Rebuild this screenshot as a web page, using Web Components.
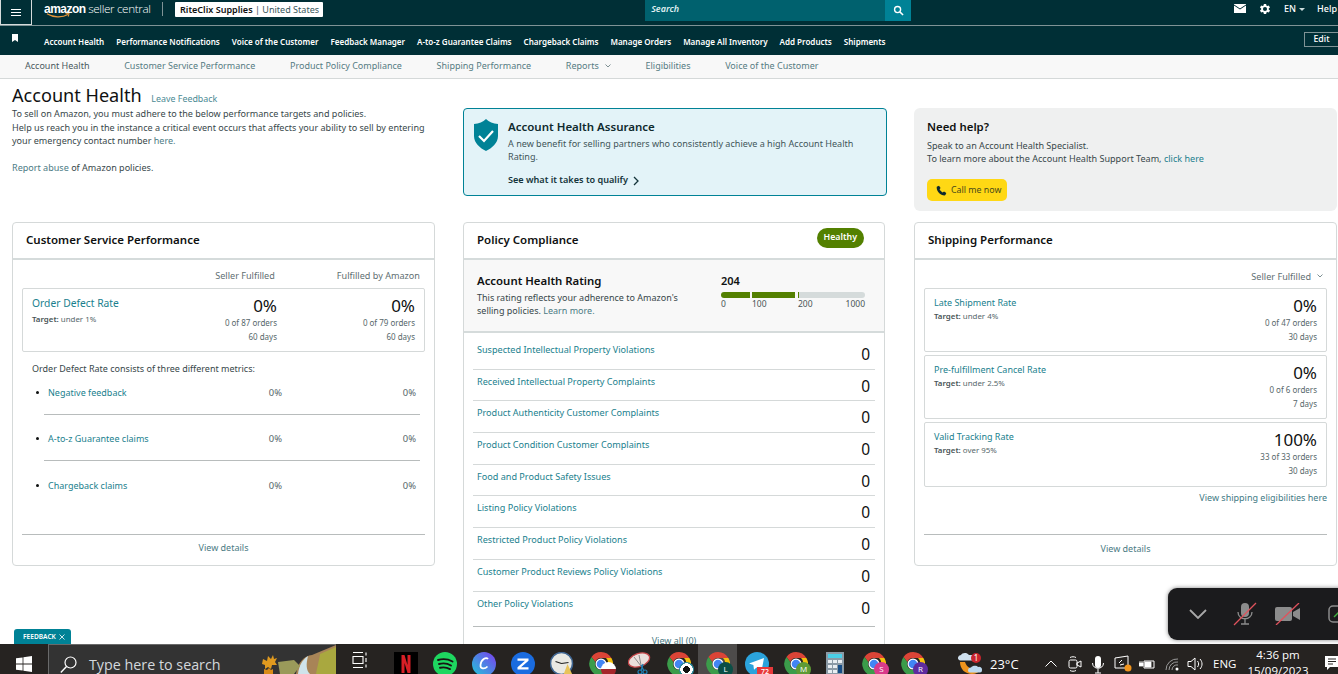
<!DOCTYPE html>
<html lang="en">
<head>
<meta charset="utf-8">
<title>Account Health</title>
<style>
    html, body {
        margin: 0;
        height: 674px;
        overflow: hidden;
        background: #fff;
        font-family: "Noto Sans", "Liberation Sans", sans-serif;
        font-size: 9.5px;
        color: #0f1111;
    }
    body { position: relative; }
</style>
</head>
<body>
<sc-topbar></sc-topbar>
<sc-menubar></sc-menubar>
<sc-subnav></sc-subnav>
<sc-main>
    <sc-intro slot="intro"></sc-intro>
    <sc-assurance slot="assurance"></sc-assurance>
    <sc-help slot="help"></sc-help>

    <sc-card slot="service" heading="Customer Service Performance" tall>
        <sc-service></sc-service>
    </sc-card>

    <sc-card slot="policy" heading="Policy Compliance" badge="Healthy" style="margin-right:1px">
        <sc-rating></sc-rating>
        <sc-policy-list>
            <sc-policy-row>Suspected Intellectual Property Violations</sc-policy-row>
            <sc-policy-row>Received Intellectual Property Complaints</sc-policy-row>
            <sc-policy-row>Product Authenticity Customer Complaints</sc-policy-row>
            <sc-policy-row>Product Condition Customer Complaints</sc-policy-row>
            <sc-policy-row>Food and Product Safety Issues</sc-policy-row>
            <sc-policy-row>Listing Policy Violations</sc-policy-row>
            <sc-policy-row>Restricted Product Policy Violations</sc-policy-row>
            <sc-policy-row>Customer Product Reviews Policy Violations</sc-policy-row>
            <sc-policy-row>Other Policy Violations</sc-policy-row>
        </sc-policy-list>
    </sc-card>

    <sc-card slot="shipping" heading="Shipping Performance" tall>
        <sc-shipping></sc-shipping>
    </sc-card>
</sc-main>
<sc-feedback></sc-feedback>
<sc-zoombar></sc-zoombar>
<sc-taskbar></sc-taskbar>

<script>
const LINK = '#1a7f8e';

class ScTopbar extends HTMLElement {
    constructor() {
        super();
        this.attachShadow({mode: 'open'});
        this.shadowRoot.innerHTML = `
            <style>
                :host { display: flex; align-items: flex-start; height: 25px; background: #002f36; border-bottom: 1px solid #7f9396; color: #fff; }
                .burger { box-sizing: border-box; width: 32px; height: 25px; border: 1px solid #d5dbdb; border-top: 0; display: flex; align-items: center; justify-content: center; }
                .logo { position: relative; margin-left: 12px; width: 107px; height: 25px; line-height: 17px; white-space: nowrap; }
                .logo b { font-family: "Liberation Sans", sans-serif; font-weight: 700; font-size: 12px; letter-spacing: -.5px; }
                .logo span { font-family: "Open Sans", sans-serif; font-weight: 300; font-size: 11.700px; letter-spacing: -.35px; }
                .logo svg { position: absolute; left: 2px; top: 13px; }
                .div { width: 1px; height: 14px; margin: 2px 12px 0 11px; background: #7f9396; }
                .store { height: 15px; margin-top: 2px; padding: 0 4px 0 5px; background: #fff; color: #0f1111; font-size: 9.050px; font-weight: 600; line-height: 15px; white-space: nowrap; border-radius: 1px; }
                .store span { color: #37575c; font-weight: 400; }
                .search { margin-left: 322px; width: 240px; height: 21px; background: #00616e; font-size: 9px; font-style: italic; font-weight: 600; line-height: 18px; text-indent: 6px; color: #dfeff1; }
                .btn { width: 26px; height: 21px; background: #008296; display: flex; align-items: center; justify-content: center; }
                .tools { margin-left: auto; display: flex; align-items: center; height: 17px; font-size: 9px; font-weight: 500; }
                .tools svg { display: block; }
                .mail { margin-right: 12px; }
                .gear { margin-right: 12px; }
                .caret { display: inline-block; margin-left: 3px; vertical-align: 1px; border: 3px solid transparent; border-top-color: #cdd; border-bottom: 0; }
                .help { margin-left: 12px; margin-right: 1px; }
            </style>
            <div class="burger"><svg width="12" height="9" viewBox="0 0 12 9"><path d="M1 1.500h10M1 4.500h10M1 7.500h10" stroke="#fff" stroke-width="1"/></svg></div>
            <div class="logo"><b>amazon</b> <span>seller central</span>
                <svg width="28" height="6" viewBox="0 0 28 6"><path d="M1 .8C7 4.600 16 5 22 1.600" fill="none" stroke="#e8973a" stroke-width="1.200"/><path d="M19.500 .8l3.600-.4-.8 3.200" fill="none" stroke="#e8973a" stroke-width="1"/></svg>
            </div>
            <div class="div"></div>
            <div class="store">RiteClix Supplies <span>| United States</span></div>
            <div class="search">Search</div>
            <div class="btn"><svg width="11" height="11" viewBox="0 0 12 12"><circle cx="5" cy="5" r="3.300" fill="none" stroke="#fff" stroke-width="1.500"/><path d="M7.500 7.500l3.500 3.500" stroke="#fff" stroke-width="1.600"/></svg></div>
            <div class="tools">
                <svg class="mail" width="12" height="9" viewBox="0 0 12 9"><path d="M0 0h12v9H0z" fill="#fff"/><path d="M0 1l6 4 6-4" fill="none" stroke="#002f36" stroke-width="1"/></svg>
                <svg class="gear" width="14" height="14" viewBox="0 0 24 24"><path fill="#fff" d="M19.400 13a7.600 7.600 0 0 0 0-2l2.100-1.600-2-3.500-2.500 1a7.500 7.500 0 0 0-1.700-1L15 3.300h-4l-.4 2.600a7.500 7.500 0 0 0-1.700 1l-2.500-1-2 3.500L6.500 11a7.600 7.600 0 0 0 0 2l-2.100 1.600 2 3.500 2.500-1a7.500 7.500 0 0 0 1.700 1l.4 2.600h4l.4-2.600a7.500 7.500 0 0 0 1.700-1l2.500 1 2-3.500zM13 15.500a3.500 3.500 0 1 1 0-7 3.500 3.500 0 0 1 0 7z" transform="translate(-1 0)"/></svg>
                <span>EN<i class="caret"></i></span>
                <span class="help">Help</span>
            </div>
        `;
    }
}

class ScMenubar extends HTMLElement {
    constructor() {
        super();
        const items = ['Account Health', 'Performance Notifications', 'Voice of the Customer', 'Feedback Manager', 'A-to-z Guarantee Claims', 'Chargeback Claims', 'Manage Orders', 'Manage All Inventory', 'Add Products', 'Shipments'];
        this.attachShadow({mode: 'open'});
        this.shadowRoot.innerHTML = `
            <style>
                :host { display: flex; align-items: center; height: 29px; padding-top: 2px; box-sizing: border-box; background: #002f36; color: #fff; font-size: 8.050px; font-weight: 600; white-space: nowrap; }
                svg { margin: -7px 26px 0 12px; flex: none; }
                span { margin-right: 12px; }
                .edit { margin: -4px 0 0 auto; box-sizing: border-box; width: 34px; height: 15px; border: 1px solid #7f9396; border-right: 0; text-align: center; line-height: 13px; font-size: 8.800px; font-weight: 500; }
            </style>
            <svg width="6" height="8" viewBox="0 0 6 8"><path d="M0 0h6v8L3 6 0 8z" fill="#fff"/></svg>
            ${items.map(i => `<span>${i}</span>`).join('')}
            <div class="edit">Edit</div>
        `;
    }
}

class ScSubnav extends HTMLElement {
    constructor() {
        super();
        const items = ['Customer Service Performance', 'Product Policy Compliance', 'Shipping Performance'];
        this.attachShadow({mode: 'open'});
        this.shadowRoot.innerHTML = `
            <style>
                :host { display: flex; align-items: center; box-sizing: border-box; height: 24px; padding: 0 0 3px 25px; gap: 34.700px; background: #f8f8f8; border-bottom: 1px solid #d5d9d9; color: #567c83; font-size: 9px; white-space: nowrap; }
                .first { color: #4a5a5e; }
                svg { margin-left: 6px; vertical-align: 1px; }
            </style>
            <span class="first">Account Health</span>
            ${items.map(i => `<span>${i}</span>`).join('')}
            <span>Reports<svg width="6" height="4" viewBox="0 0 6 4"><path d="M.5.5L3 3 5.500.5" fill="none" stroke="#7d8f92" stroke-width="1"/></svg></span>
            <span>Eligibilities</span>
            <span>Voice of the Customer</span>
        `;
    }
}

class ScMain extends HTMLElement {
    constructor() {
        super();
        this.attachShadow({mode: 'open'});
        this.shadowRoot.innerHTML = `
            <style>
                :host { display: grid; grid-template-columns: 423px 423px 423px; grid-template-rows: 137px auto; column-gap: 28px; padding: 6px 1px 0 12px; }
            </style>
            <slot name="intro"></slot>
            <slot name="assurance"></slot>
            <slot name="help"></slot>
            <slot name="service"></slot>
            <slot name="policy"></slot>
            <slot name="shipping"></slot>
        `;
    }
}

class ScIntro extends HTMLElement {
    constructor() {
        super();
        this.attachShadow({mode: 'open'});
        this.shadowRoot.innerHTML = `
            <style>
                :host { display: block; color: #37474a; font-size: 9.050px; line-height: 13.500px; }
                h1 { margin: 0 0 -2px; font-size: 18.100px; font-weight: 400; line-height: 20px; color: #0f1111; }
                h1 a { margin-left: 5px; font-size: 8.900px; color: #4b8a94; }
                p { margin: 0; white-space: nowrap; }
                p + p { margin-top: 13px; }
                a { color: #4b7b84; }
            </style>
            <h1>Account Health <a>Leave Feedback</a></h1>
            <p>To sell on Amazon, you must adhere to the below performance targets and policies.<br>
            Help us reach you in the instance a critical event occurs that affects your ability to sell by entering<br>
            your emergency contact number <a>here.</a></p>
            <p><a>Report abuse</a> of Amazon policies.</p>
        `;
    }
}

class ScAssurance extends HTMLElement {
    constructor() {
        super();
        this.attachShadow({mode: 'open'});
        this.shadowRoot.innerHTML = `
            <style>
                :host { display: flex; box-sizing: border-box; margin-top: 23px; width: 424px; height: 88px; padding: 10px 12px 0 10px; background: #e3f3f8; border: 1px solid #008296; border-radius: 4px; font-size: 9.060px; line-height: 13px; color: #3f5559; }
                svg { flex: none; margin-right: 10px; }
                h2 { margin: 1px 0 3px; font-size: 11.500px; font-weight: 600; line-height: 14px; color: #0f2a2e; }
                a { display: block; margin-top: 10px; font-size: 9.100px; font-weight: 600; color: #14343a; }
                a svg { margin: 0 0 -3px 3px; }
            </style>
            <svg width="24" height="32" viewBox="0 0 24 32"><path d="M12 0C9 3 5 4.500 0 5v12c0 7 6 12 12 15 6-3 12-8 12-15V5c-5-.5-9-2-12-5z" fill="#008296"/><path d="M5 17l5 5 9-10" fill="none" stroke="#fff" stroke-width="2.200"/></svg>
            <div>
                <h2>Account Health Assurance</h2>
                A new benefit for selling partners who consistently achieve a high Account Health Rating.
                <a>See what it takes to qualify <svg width="6" height="10" viewBox="0 0 6 10"><path d="M1 1l4 4-4 4" fill="none" stroke="#14343a" stroke-width="1.300"/></svg></a>
            </div>
        `;
    }
}

class ScHelp extends HTMLElement {
    constructor() {
        super();
        this.attachShadow({mode: 'open'});
        this.shadowRoot.innerHTML = `
            <style>
                :host { display: block; box-sizing: border-box; margin-top: 23px; height: 103px; padding: 12px 13px; background: #eff0f0; border-radius: 6px; font-size: 9.070px; line-height: 13px; color: #37474a; white-space: nowrap; }
                h2 { margin: 0 0 5px; font-size: 11.400px; font-weight: 600; line-height: 14px; color: #0f1111; }
                a { color: ${LINK}; }
                .call { display: flex; align-items: center; box-sizing: border-box; width: 80px; height: 22px; margin-top: 14px; padding-left: 9px; gap: 4px; background: #ffd814; border-radius: 5px; color: #4a4a1a; font-size: 8.800px; }
            </style>
            <h2>Need help?</h2>
            Speak to an Account Health Specialist.<br>
            To learn more about the Account Health Support Team, <a>click here</a>
            <div class="call"><svg width="11" height="11" viewBox="0 0 24 24"><path fill="#0f2a2e" d="M6.600 1.500l3.400 5-2.200 3c1.400 3 3.700 5.300 6.700 6.700l3-2.200 5 3.400-2 4.600c-.4.700-1 1-1.800 1C9.500 22.500 1.500 14.500 1.500 5.300c0-.8.300-1.400 1-1.800z"/></svg>Call me now</div>
        `;
    }
}

class ScCard extends HTMLElement {
    constructor() {
        super();
        this.attachShadow({mode: 'open'});
        const badge = this.getAttribute('badge');
        this.shadowRoot.innerHTML = `
            <style>
                :host { display: block; box-sizing: border-box; background: #fff; border: 1px solid #d5d9d9; border-radius: 4px; }
                :host([tall]) { height: 344px; }
                header { display: flex; align-items: center; justify-content: space-between; box-sizing: border-box; height: 37px; padding: 0 20px 2px 13px; border-bottom: 2px solid #d5dbdb; }
                h2 { margin: 0; font-size: 11.500px; font-weight: 600; color: #0f1111; }
                .badge { margin-top: -3px; height: 20px; padding: 0 7px; border-radius: 10px; background: #538000; color: #fff; font-size: 8.800px; font-weight: 600; line-height: 19px; }
            </style>
            <header><h2>${this.getAttribute('heading')}</h2>${badge ? `<span class="badge">${badge}</span>` : ''}</header>
            <slot></slot>
        `;
    }
}

class ScMetric extends HTMLElement {
    constructor() {
        super();
        this.attachShadow({mode: 'open'});
        this.shadowRoot.innerHTML = `
            <style>
                :host { display: flex; justify-content: space-between; box-sizing: border-box; padding: 7px 9px 0; border: 1px solid #d5d9d9; border-radius: 2px; color: #56676a; font-size: 8px; line-height: 14px; }
                .name { margin-top: var(--name-top, 0); color: ${LINK}; font-size: var(--name-size, 9px); line-height: 13px; }
                .target { margin-top: var(--target-top, 1px); font-size: 7.900px; line-height: 12px; }
                b { font-weight: 600; color: #4a5557; }
                .vals { display: flex; }
            </style>
            <div><div class="name">${this.getAttribute('name')}</div><div class="target"><b>Target:</b> ${this.getAttribute('target')}</div></div>
            <div class="vals"><slot></slot></div>
        `;
    }
}

class ScValue extends HTMLElement {
    constructor() {
        super();
        this.attachShadow({mode: 'open'});
        this.shadowRoot.innerHTML = `
            <style>
                :host { display: block; width: var(--val-width, auto); text-align: right; color: #56676a; font-size: 8px; line-height: 14px; white-space: nowrap; }
                .pct { font-size: 17px; line-height: 20px; color: #0f1111; }
            </style>
            <div class="pct">${this.getAttribute('pct')}</div>
            ${this.getAttribute('orders')}<br>${this.getAttribute('days')}
        `;
    }
}

class ScService extends HTMLElement {
    constructor() {
        super();
        this.attachShadow({mode: 'open'});
        const row = (name) => `
            <div class="row">
                <span class="dot"></span><span class="n">${name}</span><span class="a">0%</span><span class="b">0%</span>
            </div>`;
        this.shadowRoot.innerHTML = `
            <style>
                :host { display: block; position: relative; height: 305px; padding: 0 9px; color: #37474a; font-size: 9px; }
                .heads { display: flex; justify-content: flex-end; height: 28px; padding-right: 5px; line-height: 32px; color: #5f6f72; font-size: 9.100px; white-space: nowrap; }
                .heads span:first-child { margin-right: 62px; }
                sc-metric { height: 64px; --name-size: 10.300px; --name-top: 1px; --target-top: 3px; --val-width: 138px; padding-right: 9px; }
                sc-value:first-child { --val-width: auto; }
                .lead { margin: 10px 0 0 10px; line-height: 13px; }
                .list { margin: 12px 5px 0 14px; }
                .row { position: relative; display: flex; height: 27px; }
                .rule { height: 1px; background: #b8bcbc; margin-left: 8px; }
                .dot { position: absolute; left: 0; top: 4px; width: 3px; height: 3px; border-radius: 50%; background: #0f1111; }
                .n { margin-left: 12px; color: ${LINK}; line-height: 12px; }
                .a, .b { position: absolute; top: 0; line-height: 12px; font-size: 9.400px; color: #56676a; }
                .a { right: 138px; }
                .b { right: 4px; }
                .foot { position: absolute; left: 9px; right: 9px; bottom: 0; height: 30px; border-top: 1px solid #b8bcbc; text-align: center; color: #4b7b84; line-height: 26px; }
            </style>
            <div class="heads"><span>Seller Fulfilled</span><span>Fulfilled by Amazon</span></div>
            <sc-metric name="Order Defect Rate" target="under 1%">
                <sc-value pct="0%" orders="0 of 87 orders" days="60 days"></sc-value>
                <sc-value pct="0%" orders="0 of 79 orders" days="60 days"></sc-value>
            </sc-metric>
            <div class="lead">Order Defect Rate consists of three different metrics:</div>
            <div class="list">
                ${row('Negative feedback')}<div class="rule"></div>
                <div style="height:18px"></div>
                ${row('A-to-z Guarantee claims')}<div class="rule"></div>
                <div style="height:19px"></div>
                ${row('Chargeback claims')}
            </div>
            <div class="foot">View details</div>
        `;
    }
}

class ScRating extends HTMLElement {
    constructor() {
        super();
        this.attachShadow({mode: 'open'});
        this.shadowRoot.innerHTML = `
            <style>
                :host { display: flex; box-sizing: border-box; height: 73px; padding: 13px 19px 0 13px; background: #f8f8f8; border-bottom: 2px solid #d5dbdb; font-size: 9px; line-height: 13px; color: #37474a; }
                .l { width: 244px; flex: none; }
                h3 { margin: 0 0 3px; font-size: 11.400px; font-weight: 600; line-height: 15px; color: #0f1111; }
                p { margin: 0; }
                a { color: #4b7b84; }
                .r { flex: 1; }
                .score { font-size: 11px; font-weight: 600; line-height: 15px; color: #0f1111; margin-bottom: 4px; }
                .bar { display: grid; grid-template-columns: 29px 2px 43px 3px 1px 1fr; height: 6px; }
                .g { background: #538000; }
                .g.a { border-radius: 3px 0 0 3px; }
                .e { background: #d5dbdb; border-radius: 0 3px 3px 0; }
                .labels { display: flex; font-size: 8.500px; line-height: 11px; color: #4a5557; }
                .labels span:nth-child(1) { width: 31px; }
                .labels span:nth-child(2) { width: 46px; }
                .labels span:nth-child(4) { margin-left: auto; }
            </style>
            <div class="l">
                <h3>Account Health Rating</h3>
                <p>This rating reflects your adherence to Amazon's<br>selling policies. <a>Learn more.</a></p>
            </div>
            <div class="r">
                <div class="score">204</div>
                <div class="bar"><div class="g a"></div><div></div><div class="g"></div><div></div><div class="g"></div><div class="e"></div></div>
                <div class="labels"><span>0</span><span>100</span><span>200</span><span>1000</span></div>
            </div>
        `;
    }
}

class ScPolicyList extends HTMLElement {
    constructor() {
        super();
        this.attachShadow({mode: 'open'});
        this.shadowRoot.innerHTML = `
            <style>
                :host { display: block; padding: 5px 9px 0; height: 322px; }
                .foot { border-top: 1px solid #b8bcbc; height: 30px; text-align: center; color: #4b7b84; font-size: 9px; line-height: 27px; }
            </style>
            <slot></slot>
            <div class="foot">View all (0)</div>
        `;
    }
}

class ScPolicyRow extends HTMLElement {
    constructor() {
        super();
        this.attachShadow({mode: 'open'});
        this.shadowRoot.innerHTML = `
            <style>
                :host { display: flex; justify-content: space-between; box-sizing: border-box; height: 31.700px; padding: 5px 5px 0 4px; border-bottom: 1px solid #d5d9d9; color: ${LINK}; font-size: 9.100px; line-height: 13px; }
                :host(:last-of-type) { border-bottom: 0; height: 34px; }
                .n { margin-top: 2px; color: #0f1111; font-size: 15.500px; line-height: 18px; }
            </style>
            <span><slot></slot></span><span class="n">0</span>
        `;
    }
}

class ScShipping extends HTMLElement {
    constructor() {
        super();
        this.attachShadow({mode: 'open'});
        const m = (h, name, target, pct, orders, days) => `
            <sc-metric style="height:${h}px" name="${name}" target="${target}"><sc-value pct="${pct}" orders="${orders}" days="${days}"></sc-value></sc-metric>`;
        this.shadowRoot.innerHTML = `
            <style>
                :host { display: block; position: relative; height: 305px; padding: 0 9px; color: #4b7b84; font-size: 9px; }
                .sel { display: flex; justify-content: flex-end; align-items: center; gap: 6px; height: 28px; padding: 4px 4px 0 0; box-sizing: border-box; color: #5f6f72; font-size: 9.100px; }
                .boxes { display: grid; row-gap: 3px; }
                sc-metric { --name-size: 9px; }
                .link { margin-top: 4px; text-align: right; line-height: 13px; color: #3f7b85; }
                .foot { position: absolute; left: 9px; right: 9px; bottom: 0; height: 30px; border-top: 1px solid #b8bcbc; text-align: center; line-height: 28px; }
            </style>
            <div class="sel">Seller Fulfilled <svg width="6" height="4" viewBox="0 0 6 4"><path d="M.5.5L3 3 5.500.5" fill="none" stroke="#7d8f92" stroke-width="1"/></svg></div>
            <div class="boxes">
                ${m(64, 'Late Shipment Rate', 'under 4%', '0%', '0 of 47 orders', '30 days')}
                ${m(64, 'Pre-fulfillment Cancel Rate', 'under 2.5%', '0%', '0 of 6 orders', '7 days')}
                ${m(65, 'Valid Tracking Rate', 'over 95%', '100%', '33 of 33 orders', '30 days')}
            </div>
            <div class="link">View shipping eligibilities here</div>
            <div class="foot">View details</div>
        `;
    }
}

class ScFeedback extends HTMLElement {
    constructor() {
        super();
        this.attachShadow({mode: 'open'});
        this.shadowRoot.innerHTML = `
            <style>
                :host { position: absolute; left: 14px; top: 629px; box-sizing: border-box; width: 57px; height: 15px; background: #008296; border-radius: 3px 3px 0 0; color: #fff; font-size: 6.600px; font-weight: 600; line-height: 15px; padding-left: 9px; white-space: nowrap; }
                svg { margin-left: 3px; vertical-align: -1px; }
            </style>
            FEEDBACK<svg width="6" height="6" viewBox="0 0 6 6"><path d="M.5.5l5 5M5.500.5l-5 5" stroke="#fff" stroke-width=".8"/></svg>
        `;
    }
}

class ScZoombar extends HTMLElement {
    constructor() {
        super();
        this.attachShadow({mode: 'open'});
        this.shadowRoot.innerHTML = `
            <style>
                :host { position: absolute; left: 1168px; top: 588px; width: 190px; height: 52px; display: flex; align-items: center; background: #1b1b1d; border-radius: 9px; box-shadow: 0 0 4px rgba(0,0,0,.5); }
                svg { display: block; flex: none; }
            </style>
            <svg style="margin-left:21px" width="18" height="10" viewBox="0 0 18 10"><path d="M1 1l8 8 8-8" fill="none" stroke="#a9a9a9" stroke-width="1.800"/></svg>
            <svg style="margin-left:26px" width="24" height="24" viewBox="0 0 24 24"><rect x="8" y="1" width="8" height="14" rx="4" fill="#8c8c8c"/><path d="M5 10c0 9 14 9 14 0M12 17v5M8 22h8" fill="none" stroke="#8c8c8c" stroke-width="1.300"/><path d="M1 23L23 1" stroke="#e0525c" stroke-width="1.300"/></svg>
            <svg style="margin-left:18px" width="25" height="22" viewBox="0 0 25 22"><rect x="0" y="4" width="17" height="14" rx="2" fill="#8c8c8c"/><path d="M18 9l7-4v12l-7-4z" fill="#8c8c8c"/><path d="M1 22L24 0" stroke="#e0525c" stroke-width="1.300"/></svg>
            <svg style="margin-left:28px" width="20" height="20" viewBox="0 0 20 20"><rect x="1" y="2" width="16" height="16" rx="4" fill="none" stroke="#8c8c8c" stroke-width="1.500"/><path d="M6 13l5-5" stroke="#3fae3f" stroke-width="1.500"/></svg>
        `;
    }
}

// taskbar icons are drawn on a 24x24 box
const chrome = (badge) => `
    <svg width="24" height="24" viewBox="0 0 24 24">
        <path d="M12 0a12 12 0 0 1 10.400 6H12a6 6 0 0 0-5.700 4.100L2.500 5A12 12 0 0 1 12 0z" fill="#db4437"/>
        <path d="M22.400 6A12 12 0 0 1 12 24l5.200-9A6 6 0 0 0 17 6z" fill="#f4c20d"/>
        <path d="M2.500 5A12 12 0 0 0 12 24l5.200-9a6 6 0 0 1-10.900-4.900z" fill="#3b9c4a"/>
        <circle cx="12" cy="12" r="5.500" fill="#fff"/><circle cx="12" cy="12" r="4.300" fill="#4285f4"/>
    </svg>${badge || ''}`;
const letter = (bg, t) => `<i class="badge" style="background:${bg}">${t}</i>`;

const ICONS = {
    task: `<svg width="16" height="18" viewBox="0 0 16 18"><path d="M1 .5h10M1 15.500h10M1 4.500h10v7H1zM14 .5v3M14 6v4M14 12.500v3" fill="none" stroke="#fff" stroke-width="1.100"/></svg>`,
    netflix: `<svg width="24" height="24" viewBox="0 0 24 24"><rect width="24" height="24" fill="#000"/><path d="M7.500 3h3l3 10V3h3v18h-3l-3-10v10h-3z" fill="#d81f26"/></svg>`,
    spotify: `<svg width="24" height="24" viewBox="0 0 24 24"><circle cx="12" cy="12" r="12" fill="#1ed760"/><path d="M5 8c5-1.500 10-1 14.500 1.500M6 12c4-1 8.500-.6 12 1.500M7 15.800c3.500-.8 7-.4 10 1.300" fill="none" stroke="#191414" stroke-width="1.900" stroke-linecap="round"/></svg>`,
    canva: `<svg width="24" height="24" viewBox="0 0 24 24"><defs><linearGradient id="c" x1="0" y1="1" x2="1" y2="0"><stop offset="0" stop-color="#1fc8d8"/><stop offset="1" stop-color="#7d3cf0"/></linearGradient></defs><circle cx="12" cy="12" r="12" fill="url(#c)"/><path d="M16 7c-2-2.500-7 .5-7.500 6-.4 4 4 4.500 7 1.500" fill="none" stroke="#fff" stroke-width="1.700"/></svg>`,
    zoom: `<svg width="24" height="24" viewBox="0 0 24 24"><circle cx="12" cy="12" r="12" fill="#1a6ce0"/><path d="M6.500 6.500h11v2.200L10 15.300h7.500v2.200h-11v-2.200L14 8.700H6.500z" fill="#fff"/></svg>`,
    clock: `<svg width="24" height="24" viewBox="0 0 24 24"><circle cx="11.500" cy="11.500" r="11" fill="#e9e9e4" stroke="#3f6591" stroke-width="1.500"/><path d="M11.500 11.500l-6-2M11.500 11.500l7-1" stroke="#222" stroke-width="1.200"/><path d="M17.500 12l5.500 12H13z" fill="#e8c35a"/></svg>`,
    scissors: `<svg width="24" height="24" viewBox="0 0 24 24"><ellipse cx="11" cy="8" rx="11" ry="6.500" transform="rotate(-20 11 8)" fill="#eadfdc" stroke="#c6474a" stroke-width="1.300"/><path d="M11 3l2 10M6 5l7 9" stroke="#8a8a8a" stroke-width="1"/><path d="M13 13l3 6M15 12l-2 7" stroke="#1f7fb4" stroke-width="1.300"/><circle cx="12" cy="20" r="2" fill="none" stroke="#1f7fb4" stroke-width="1.200"/><circle cx="17" cy="20" r="2" fill="none" stroke="#1f7fb4" stroke-width="1.200"/></svg>`,
    telegram: `<svg width="24" height="24" viewBox="0 0 24 24"><circle cx="12" cy="12" r="12" fill="#2ba3dc"/><path d="M4 11.500L19 6l-2.500 13-5-3.500-2.500 2.300-.6-4.800z" fill="#fff"/></svg><i class="count">72</i>`,
    calc: `<svg width="18" height="24" viewBox="0 0 18 24"><rect width="18" height="24" fill="#8b9aa6"/><rect x="2" y="2" width="14" height="4" fill="#4bcfe8"/><g fill="#e9eef2"><rect x="2" y="8" width="4" height="3"/><rect x="7" y="8" width="4" height="3"/><rect x="12" y="8" width="4" height="3"/><rect x="2" y="13" width="4" height="3"/><rect x="7" y="13" width="4" height="3"/><rect x="2" y="18" width="4" height="3"/><rect x="7" y="18" width="4" height="3"/></g><rect x="12" y="13" width="4" height="8" fill="#174d86"/></svg>`
};

class ScTaskIcon extends HTMLElement {
    constructor() {
        super();
        this.attachShadow({mode: 'open'});
        const kind = this.getAttribute('kind');
        const bg = this.getAttribute('bg');
        const t = this.getAttribute('letter');
        const inner = kind === 'chrome' ? chrome(bg ? letter(bg, t) : '') : ICONS[kind];
        this.shadowRoot.innerHTML = `
            <style>
                :host { display: flex; justify-content: center; align-items: flex-start; position: relative; box-sizing: border-box; width: 39px; height: 30px; padding-top: 8px; }
                :host([on]) { background: #4d4b4a; }
                svg { display: block; flex: none; }
                .badge { position: absolute; left: 20px; top: 18px; width: 15px; height: 15px; border-radius: 50%; color: #fff; font-style: normal; font-size: 8px; line-height: 14px; text-align: center; }
                .count { position: absolute; left: 20px; top: 23px; width: 16px; height: 9px; background: #e8393a; color: #fff; font-style: normal; font-size: 7px; font-weight: 600; line-height: 9px; text-align: center; }
            </style>
            ${inner}
        `;
    }
}

class ScTaskbar extends HTMLElement {
    constructor() {
        super();
        this.attachShadow({mode: 'open'});
        const pic = `<svg class="pic" width="76" height="30" viewBox="0 0 76 30">
            <path d="M36 30C38 18 44 12 52 11L76 1v29z" fill="#a88457"/>
            <path d="M56 30c2-10 4-18 4-20L76 3v27z" fill="#a9a83f"/>
            <path d="M38 30c1-8 4-14 10-18-2 8-2 14 2 18z" fill="#cfe3ea"/>
            <path d="M18 18l16-2 6 6-6 8H20z" fill="#9a9a5a"/>
            <path d="M3 15l4 2 1-5 3 3 2-4 1 4 3-1-2 4 2 3h-5l-1 4-3-2-3 2v-4l-3-1z" fill="#e09a1f"/>
            <path d="M4 25l3 1 2-2 2 2 2-1v5H4z" fill="#d98b17"/>
        </svg>`;
        this.shadowRoot.innerHTML = `
            <style>
                :host { position: absolute; left: 0; top: 644px; width: 1338px; height: 30px; overflow: hidden; display: flex; background: #262321; color: #fff; font-family: "Open Sans", "Noto Sans", sans-serif; white-space: nowrap; }
                .start { width: 48px; flex: none; display: flex; justify-content: center; padding-top: 12px; box-sizing: border-box; }
                .search { position: relative; flex: none; box-sizing: border-box; width: 288px; display: flex; background: #333; border-left: 1px solid #6a6a6a; border-top: 1px solid #6a6a6a; }
                .search svg.mag { margin: 11px 0 0 11px; }
                .search span { margin-left: 12px; font-size: 14.300px; line-height: 39px; color: #d4d8dc; height: 30px; }
                .pic { position: absolute; right: 0; top: -1px; }
                .apps { display: flex; margin-left: 4px; }
                .apps sc-task-icon:first-child { margin-right: 7px; }
                .tray { position: relative; flex: 1; }
                .tray > * { position: absolute; }
                .t { font-size: 11.500px; line-height: 14px; }
                .clock { left: 311px; top: 3px; width: 70px; text-align: center; font-size: 11.500px; line-height: 16px; }
            </style>
            <div class="start"><svg width="16" height="16" viewBox="0 0 16 16"><path fill="#fff" d="M0 2.300l6.600-.9v6.200H0zM7.400 1.300L16 0v7.600H7.400zM0 8.400h6.600v6.200L0 13.700zM7.400 8.400H16V16l-8.600-1.300z"/></svg></div>
            <div class="search">
                <svg class="mag" width="17" height="17" viewBox="0 0 17 17"><circle cx="10.500" cy="6.500" r="5.500" fill="none" stroke="#fff" stroke-width="1.200"/><path d="M6.500 10.500L.8 16.500" stroke="#fff" stroke-width="1.400"/></svg>
                <span>Type here to search</span>
                ${pic}
            </div>
            <div class="apps">
                <sc-task-icon kind="task"></sc-task-icon>
                <sc-task-icon kind="netflix"></sc-task-icon>
                <sc-task-icon kind="spotify"></sc-task-icon>
                <sc-task-icon kind="canva"></sc-task-icon>
                <sc-task-icon kind="zoom"></sc-task-icon>
                <sc-task-icon kind="clock"></sc-task-icon>
                <sc-task-icon kind="chrome" bg="linear-gradient(#fff 45%, #a5262b 45%)" letter=""></sc-task-icon>
                <sc-task-icon kind="scissors"></sc-task-icon>
                <sc-task-icon kind="chrome" bg="radial-gradient(#111 30%, #fff 32%, #fff 58%, #2a8a9c 60%)" letter=""></sc-task-icon>
                <sc-task-icon kind="chrome" bg="#0b4f46" letter="L" on></sc-task-icon>
                <sc-task-icon kind="telegram"></sc-task-icon>
                <sc-task-icon kind="chrome" bg="#5e9a35" letter="M"></sc-task-icon>
                <sc-task-icon kind="calc"></sc-task-icon>
                <sc-task-icon kind="chrome" bg="#d83a8a" letter="S"></sc-task-icon>
                <sc-task-icon kind="chrome" bg="#5e2b9e" letter="R"></sc-task-icon>
            </div>
            <div class="tray">
                <svg style="left:26px;top:8px" width="25" height="22" viewBox="0 0 25 22"><path d="M2 10c0 7 5 12 12 12 4 0 7-2 9-5-6 2-14 0-16-7z" fill="#f0941d"/><path d="M0 5.500A3 3 0 0 1 3 3c1-2.500 6-3 8 0h3a2.500 2.500 0 0 1 0 5.500H2.500A2.500 2.500 0 0 1 0 5.500z" fill="#cfe0ee"/><path d="M10 18.500a3 3 0 0 1 3-3c1-2 6-2.500 7-.5a3 3 0 0 1 4 3.500 2 2 0 0 1-2 2H12a2 2 0 0 1-2-2z" fill="#bcd8ee"/><circle cx="18" cy="6" r="5" fill="#c9252d"/><text x="18" y="9" font-size="8" fill="#fff" text-anchor="middle" font-family="Noto Sans">1</text></svg>
                <span class="t" style="left:58px;top:13px;font-size:13px">23&#176;C</span>
                <svg style="left:113px;top:16px" width="12" height="7" viewBox="0 0 12 7"><path d="M.5 6.500L6 1l5.500 5.500" fill="none" stroke="#fff" stroke-width="1"/></svg>
                <svg style="left:136px;top:12px" width="14" height="16" viewBox="0 0 14 16"><rect x="1" y="4" width="8" height="8" rx="1.500" fill="none" stroke="#fff"/><path d="M9 7l4-2v6l-4-2zM2 1.500c2-1 4-1 6 0M2 14.500c2 1 4 1 6 0" fill="none" stroke="#fff"/></svg>
                <svg style="left:160px;top:12px" width="12" height="18" viewBox="0 0 12 18"><rect x="3" y="0" width="6" height="12" rx="3" fill="#fff"/><path d="M.5 7c0 7 11 7 11 0M6 13v4M3 17h6" fill="none" stroke="#fff"/></svg>
                <svg style="left:182px;top:11px" width="18" height="18" viewBox="0 0 18 18"><path d="M1 3l13-2v12H1z" fill="none" stroke="#fff"/><path d="M5 8l3-3M6 10l4-1" stroke="#fff"/><circle cx="14" cy="13" r="3.500" fill="#f0941d"/></svg>
                <svg style="left:207px;top:15px" width="16" height="10" viewBox="0 0 16 10"><path d="M5 2h10v7H5z" fill="none" stroke="#fff"/><path d="M6 3h6v5H6zM0 4h4v3H0zM1 2v2M3 2v2" fill="#fff" stroke="#fff" stroke-width=".8"/></svg>
                <svg style="left:233px;top:13px" width="14" height="14" viewBox="0 0 14 14"><path d="M1 13A11 11 0 0 1 13 2M4 13a8 8 0 0 1 9-8M7 13a5 5 0 0 1 6-5" fill="none" stroke="#9b9b9b"/><circle cx="12" cy="12" r="1.500" fill="#fff"/></svg>
                <svg style="left:255px;top:13px" width="17" height="14" viewBox="0 0 17 14"><path d="M1 4.500h3l4-3.500v12l-4-3.500H1zM10.500 4c1.500 2 1.500 4 0 6M13 2c2.700 3 2.700 7 0 10" fill="none" stroke="#fff"/></svg>
                <span class="t" style="left:281px;top:13px">ENG</span>
                <div class="clock">4:36 pm<br>15/09/2023</div>
                <svg style="left:393px;top:12px" width="14" height="14" viewBox="0 0 14 14"><path d="M0 0h14v11H5l-3 3v-3H0z" fill="#fff"/><path d="M3 3h8M3 5.500h8M3 8h5" stroke="#262321"/></svg>
            </div>
        `;
    }
}

customElements.define('sc-topbar', ScTopbar);
customElements.define('sc-menubar', ScMenubar);
customElements.define('sc-subnav', ScSubnav);
customElements.define('sc-main', ScMain);
customElements.define('sc-intro', ScIntro);
customElements.define('sc-assurance', ScAssurance);
customElements.define('sc-help', ScHelp);
customElements.define('sc-card', ScCard);
customElements.define('sc-metric', ScMetric);
customElements.define('sc-value', ScValue);
customElements.define('sc-service', ScService);
customElements.define('sc-rating', ScRating);
customElements.define('sc-policy-list', ScPolicyList);
customElements.define('sc-policy-row', ScPolicyRow);
customElements.define('sc-shipping', ScShipping);
customElements.define('sc-feedback', ScFeedback);
customElements.define('sc-zoombar', ScZoombar);
customElements.define('sc-task-icon', ScTaskIcon);
customElements.define('sc-taskbar', ScTaskbar);
</script>
</body>
</html>
